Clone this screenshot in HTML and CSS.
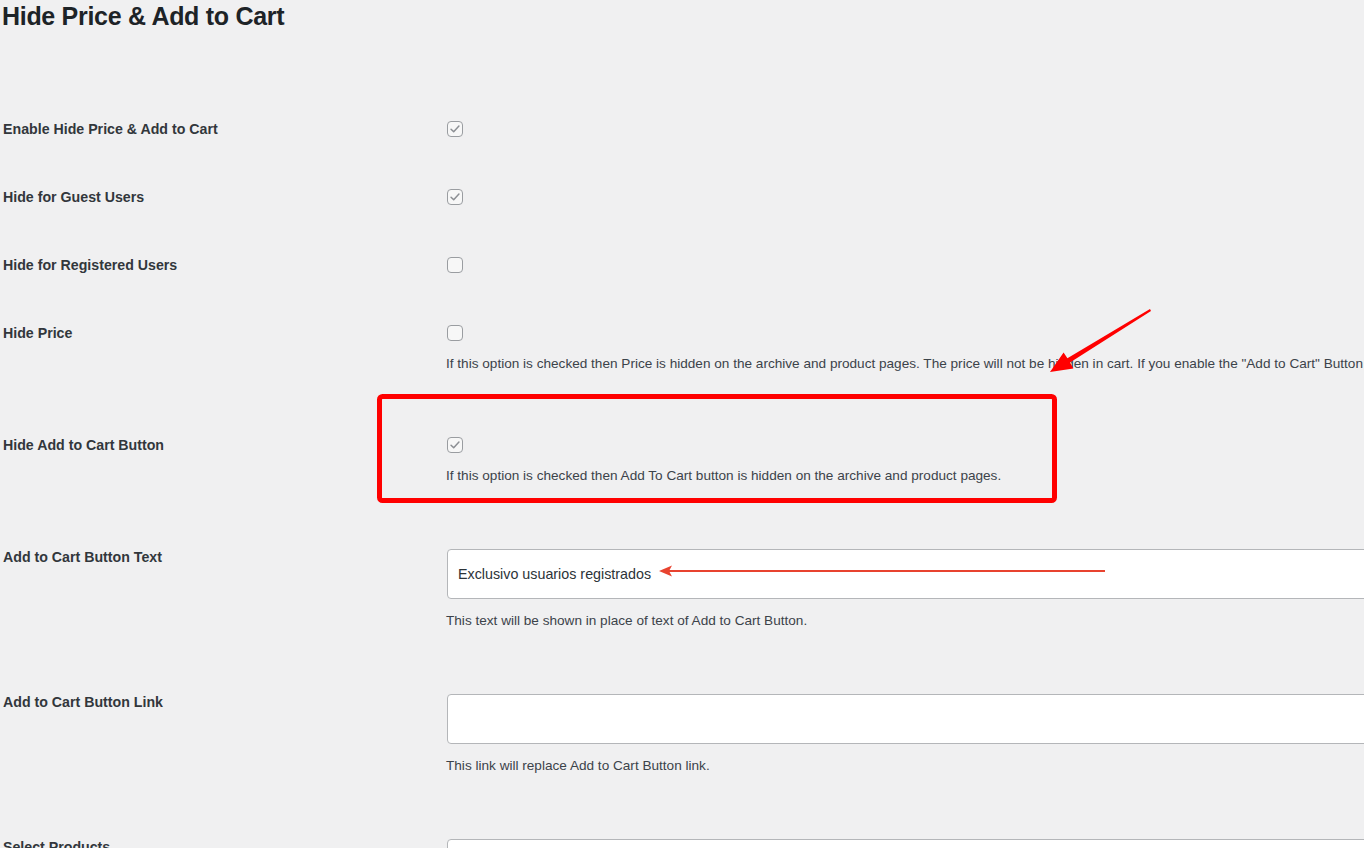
FILE: index.html
```html
<!DOCTYPE html>
<html lang="en">
<head>
    <meta charset="UTF-8">
    <meta name="viewport" content="width=device-width, initial-scale=1.0">
    <title>Hide Price &amp; Add to Cart</title>
    <link rel="stylesheet" href="styles.css">
</head>
<body>
    <div class="wrap">
        <h1>Hide Price &amp; Add to Cart</h1>

        <div class="form-table">
            <div class="row">
                <div class="label">Enable Hide Price &amp; Add to Cart</div>
                <div class="field">
                    <span class="check">
                        <svg viewBox="0 0 16 16" width="14" height="14"><path d="M3.5 8.2l3 3 6-6.6"/></svg>
                    </span>
                </div>
            </div>

            <div class="row">
                <div class="label">Hide for Guest Users</div>
                <div class="field">
                    <span class="check">
                        <svg viewBox="0 0 16 16" width="14" height="14"><path d="M3.5 8.2l3 3 6-6.6"/></svg>
                    </span>
                </div>
            </div>

            <div class="row">
                <div class="label">Hide for Registered Users</div>
                <div class="field">
                    <span class="check"></span>
                </div>
            </div>

            <div class="row">
                <div class="label">Hide Price</div>
                <div class="field">
                    <span class="check"></span>
                    <p class="desc">If this option is checked then Price is hidden on the archive and product pages. The price will not be hidden in cart. If you enable the "Add to Cart" Button Text option then it will be shown instead.</p>
                </div>
            </div>

            <div class="row">
                <div class="label">Hide Add to Cart Button</div>
                <div class="field">
                    <span class="check">
                        <svg viewBox="0 0 16 16" width="14" height="14"><path d="M3.5 8.2l3 3 6-6.6"/></svg>
                    </span>
                    <p class="desc">If this option is checked then Add To Cart button is hidden on the archive and product pages.</p>
                </div>
            </div>

            <div class="row">
                <div class="label">Add to Cart Button Text</div>
                <div class="field">
                    <input type="text" class="text-input" value="Exclusivo usuarios registrados">
                    <p class="desc">This text will be shown in place of text of Add to Cart Button.</p>
                </div>
            </div>

            <div class="row">
                <div class="label">Add to Cart Button Link</div>
                <div class="field">
                    <input type="text" class="text-input" value="">
                    <p class="desc">This link will replace Add to Cart Button link.</p>
                </div>
            </div>

            <div class="row">
                <div class="label">Select Products</div>
                <div class="field">
                    <input type="text" class="text-input" value="">
                </div>
            </div>
        </div>
    </div>

    <!-- anotaciones en rojo sobre la captura -->
    <svg class="marks" width="1364" height="848" viewBox="0 0 1364 848">
        <rect x="379.5" y="396.5" width="675" height="104" rx="3" fill="none" stroke="#ff0000" stroke-width="5"/>
        <polygon fill="#ff0000" points="1150,309 1151,311 1070,362.6 1073.4,368.4 1050,372 1063.6,352.4 1067.4,358.2"/>
        <line x1="1105" y1="571" x2="668" y2="571" stroke="#e8432f" stroke-width="2.2"/>
        <polygon fill="#e8432f" points="659,571 672,565.5 669,571 672,576.5"/>
    </svg>
</body>
</html>
```

FILE: styles.css
```css
* {
    margin: 0;
    padding: 0;
    box-sizing: border-box;
}
html, body {
    overflow: hidden;
    height: 100%;
}
body {
    background-color: #f0f0f1;
    color: #2c3338;
    font-family: 'Liberation Sans', Arial, sans-serif;
    position: relative;
}
.wrap {
    padding-left: 2px;
    width: 1800px;
}
h1 {
    margin-top: 1px;
    font-size: 25px;
    line-height: 30px;
    font-weight: bold;
    letter-spacing: -0.3px;
    color: #1d2327;
}
.form-table {
    margin-top: 64px;
}
.row {
    display: flex;
}
.label {
    width: 444px;
    flex-shrink: 0;
    padding-top: 24px;
    padding-left: 1px;
    font-size: 14.2px;
    line-height: 20px;
    font-weight: bold;
    color: #32373c;
}
.field {
    flex: 1;
    padding: 26px 0;
}
.check {
    display: flex;
    align-items: center;
    justify-content: center;
    width: 16px;
    height: 16px;
    margin-left: 1px;
    border: 1px solid #9a9da1;
    border-radius: 4px;
    background-color: #f7f7f7;
}
.check svg path {
    fill: none;
    stroke: #8c8f94;
    stroke-width: 1.7;
    stroke-linecap: round;
    stroke-linejoin: round;
}
.desc {
    margin: 15px 0 13px;
    font-size: 13.6px;
    line-height: 16px;
    color: #3c434a;
    white-space: nowrap;
}
.text-input {
    display: block;
    width: 1000px;
    height: 50px;
    margin-left: 1px;
    padding: 0 10px;
    border: 1px solid #b4b6b9;
    border-radius: 4px;
    background-color: #fff;
    font-family: 'Liberation Sans', Arial, sans-serif;
    font-size: 14.3px;
    color: #2c3338;
    outline: none;
}
.text-input + .desc {
    margin-top: 14px;
}
.marks {
    position: absolute;
    top: 0;
    left: 0;
    pointer-events: none;
}
```
